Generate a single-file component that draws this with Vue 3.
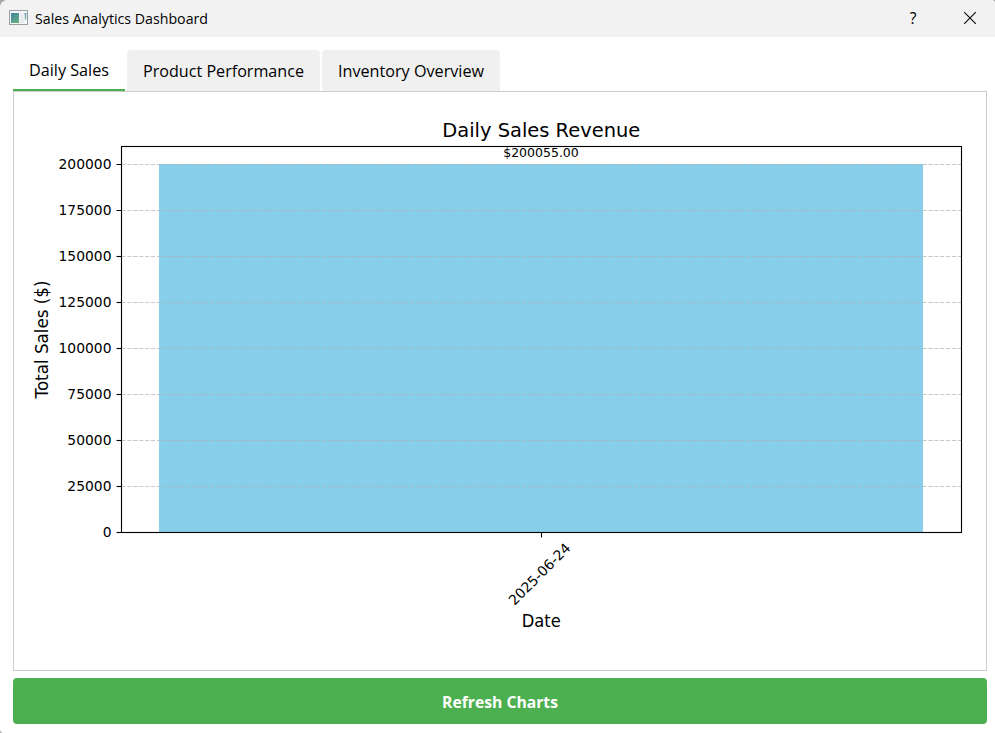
<script setup>
import { ref } from 'vue'

const tabs = [
  { label: 'Daily Sales', width: 80 },
  { label: 'Product Performance', width: 161 },
  { label: 'Inventory Overview', width: 146 },
]
const active = ref(0)

const ticks = [0, 25000, 50000, 75000, 100000, 125000, 150000, 175000, 200000].map((value, i) => ({
  value,
  y: 532.5 - i * 46,
}))
</script>

<template>
  <div class="window">
    <header class="titlebar">
      <svg class="app-icon" width="20" height="16" viewBox="0 0 20 16">
        <defs>
          <linearGradient id="screen" x1="0" y1="0" x2="0.6" y2="1">
            <stop offset="0" stop-color="#4681a0" />
            <stop offset="1" stop-color="#5fae80" />
          </linearGradient>
          <linearGradient id="strip" x1="0" y1="0" x2="0" y2="1">
            <stop offset="0" stop-color="#4f8ca0" />
            <stop offset="1" stop-color="#a9d0b8" />
          </linearGradient>
        </defs>
        <rect x="0.5" y="0.5" width="18" height="14" fill="#f4f7f8" stroke="#9a9fa5" />
        <rect x="2" y="3" width="8" height="10" fill="url(#screen)" />
        <rect x="11" y="3" width="4" height="10" fill="#e9edf1" />
        <rect x="15.7" y="3" width="1.6" height="7" fill="url(#strip)" />
      </svg>
      <svg class="caption" width="176" height="24">
        <text x="0" y="18" textLength="173" lengthAdjust="spacingAndGlyphs">Sales Analytics Dashboard</text>
      </svg>
      <span class="spacer"></span>
      <button class="control help" aria-label="Help">?</button>
      <button class="control close" aria-label="Close">
        <svg width="14" height="14" viewBox="0 0 14 14">
          <path d="M1.2 1.2 L12.8 12.8 M12.8 1.2 L1.2 12.8" stroke="#111" stroke-width="1.2" fill="none" />
        </svg>
      </button>
    </header>

    <main class="content">
      <nav class="tabs">
        <button
          v-for="(tab, i) in tabs"
          :key="tab.label"
          class="tab"
          :class="{ active: i === active }"
          @click="active = i"
        >
          <svg :width="tab.width" height="24">
            <text x="0" y="18" :textLength="tab.width" lengthAdjust="spacingAndGlyphs">{{ tab.label }}</text>
          </svg>
        </button>
      </nav>

      <section class="panel">
        <svg class="chart" width="972" height="578" viewBox="14 92 972 578">
          <rect x="159" y="164" width="764" height="368.5" fill="#87ceeb" />
          <g class="grid">
            <line v-for="t in ticks" :key="t.value" x1="121.5" x2="961.5" :y1="t.y" :y2="t.y" />
          </g>
          <g class="axis">
            <line v-for="t in ticks" :key="t.value" x1="116.5" x2="121.5" :y1="t.y" :y2="t.y" />
            <line x1="541.5" x2="541.5" y1="532.5" y2="537.5" />
            <rect x="121.5" y="146.5" width="840" height="386" />
          </g>
          <g class="tick-label" text-anchor="end">
            <text v-for="t in ticks" :key="t.value" x="111.5" :y="t.y + 4.5">{{ t.value }}</text>
          </g>
          <text class="chart-title" x="541.3" y="137" text-anchor="middle">Daily Sales Revenue</text>
          <text class="value-label" x="541" y="157" text-anchor="middle">$200055.00</text>
          <text class="tick-label" transform="translate(543 577.6) rotate(-45)" text-anchor="middle">2025-06-24</text>
          <text class="axis-label" x="541.2" y="627" text-anchor="middle" textLength="39" lengthAdjust="spacingAndGlyphs">Date</text>
          <text class="axis-label" transform="translate(47.8 339.5) rotate(-90)" text-anchor="middle" textLength="118" lengthAdjust="spacingAndGlyphs">Total Sales ($)</text>
        </svg>
      </section>

      <button class="refresh">
        <svg width="117" height="24">
          <text x="0" y="19" textLength="116" lengthAdjust="spacingAndGlyphs">Refresh Charts</text>
        </svg>
      </button>
    </main>
  </div>
</template>

<style>
body {
  background: #a9a9a9;
}
</style>

<style scoped>
.window {
  box-sizing: border-box;
  display: flex;
  flex-direction: column;
  width: 995px;
  height: 733px;
  overflow: hidden;
  background: #fff;
  border-radius: 8px 4px 0 4px;
  font-family: "Open Sans", "Noto Sans", sans-serif;
  color: #000;
}
button {
  border: 0;
  margin: 0;
  padding: 0;
  font: inherit;
  color: inherit;
}
svg {
  display: block;
}
text {
  fill: currentColor;
}
.titlebar {
  display: flex;
  box-sizing: border-box;
  flex: none;
  align-items: center;
  height: 37px;
  padding: 0 0 1px 9px;
  background: #f2f2f2;
}
.app-icon {
  margin-right: 6px;
}
.caption {
  font-size: 14.5px;
}
.spacer {
  flex: 1;
}
.control {
  display: flex;
  align-items: center;
  justify-content: center;
  background: none;
}
.help {
  width: 20px;
  margin-right: 40px;
  font-size: 15.5px;
}
.close {
  width: 14px;
  margin-right: 18px;
}
.content {
  display: flex;
  flex: 1;
  flex-direction: column;
  padding: 13px 8px 9px 13px;
}
.tabs {
  display: flex;
  flex: none;
  gap: 2px;
  height: 41px;
}
.tab {
  display: flex;
  box-sizing: border-box;
  align-items: flex-start;
  height: 41px;
  padding: 9px 16px 0;
  background: #f0f0f0;
  border-radius: 4px 4px 0 0;
  font-size: 16.5px;
}
.tab svg {
  overflow: visible;
}
.tab.active {
  padding-top: 8px;
  background: #fff;
  border-bottom: 2px solid #4caf50;
  border-radius: 0;
}
.panel {
  box-sizing: border-box;
  flex: none;
  width: 974px;
  height: 580px;
  border: 1px solid #cccccc;
}
.chart {
  font-family: "DejaVu Sans", sans-serif;
}
.grid line {
  stroke: #b0b0b0;
  stroke-opacity: 0.7;
  stroke-width: 1.11;
  stroke-dasharray: 4.11 1.78;
}
.axis line,
.axis rect {
  fill: none;
  stroke: #000;
  stroke-width: 1.11;
}
.tick-label {
  font-size: 13.89px;
}
.chart-title {
  font-size: 19.44px;
}
.value-label {
  font-size: 12.5px;
}
.axis-label {
  font-size: 17.4px;
}
.refresh {
  display: flex;
  flex: none;
  align-items: center;
  justify-content: center;
  width: 974px;
  height: 46px;
  margin-top: 7px;
  background: #4caf50;
  border-radius: 4px;
  color: #fff;
  font-size: 16px;
  font-weight: 700;
}
</style>
